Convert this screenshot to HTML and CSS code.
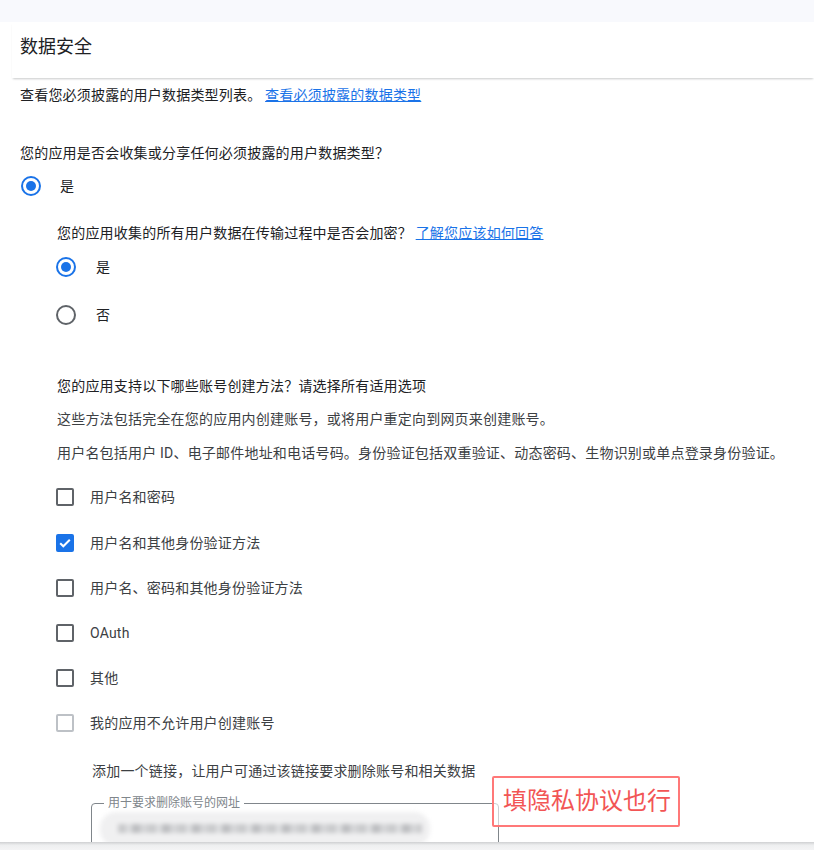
FILE: index.html
```html
<!DOCTYPE html>
<html lang="zh-CN">
<head>
<meta charset="utf-8">
<title>数据安全</title>
<link rel="stylesheet" href="styles.css">
</head>
<body>
<div class="topband"></div>
<header class="header"><h1 class="title">数据安全</h1></header>
<main class="content">
  <p class="desc">查看您必须披露的用户数据类型列表。 <a class="link" href="#">查看必须披露的数据类型</a></p>
  <p class="question">您的应用是否会收集或分享任何必须披露的用户数据类型？</p>
  <div class="radio-row top-radio"><span class="radio checked"></span><span class="label">是</span></div>

  <section class="nested">
    <p class="q2">您的应用收集的所有用户数据在传输过程中是否会加密？ <a class="link" href="#">了解您应该如何回答</a></p>
    <div class="radio-row r-yes"><span class="radio checked"></span><span class="label">是</span></div>
    <div class="radio-row r-no"><span class="radio"></span><span class="label">否</span></div>

    <p class="q3">您的应用支持以下哪些账号创建方法？请选择所有适用选项</p>
    <p class="sub sub1">这些方法包括完全在您的应用内创建账号，或将用户重定向到网页来创建账号。</p>
    <p class="sub sub2">用户名包括用户 ID、电子邮件地址和电话号码。身份验证包括双重验证、动态密码、生物识别或单点登录身份验证。</p>

    <ul class="checks">
      <li class="check-row"><span class="box"></span><span class="label">用户名和密码</span></li>
      <li class="check-row first-gap"><span class="box checked"><svg viewBox="0 0 18 18" width="18" height="18"><path d="M4.2 9.2l3.1 3.1 6.5-6.6" fill="none" stroke="#fff" stroke-width="2"/></svg></span><span class="label">用户名和其他身份验证方法</span></li>
      <li class="check-row"><span class="box"></span><span class="label">用户名、密码和其他身份验证方法</span></li>
      <li class="check-row"><span class="box"></span><span class="label">OAuth</span></li>
      <li class="check-row"><span class="box"></span><span class="label">其他</span></li>
      <li class="check-row"><span class="box disabled"></span><span class="label">我的应用不允许用户创建账号</span></li>
    </ul>

    <div class="delete-block">
      <p class="add-link">添加一个链接，让用户可通过该链接要求删除账号和相关数据</p>
      <fieldset class="url-field">
        <legend class="legend">用于要求删除账号的网址</legend>
        <div class="blurred">
          <span class="blur-bar"></span>
        </div>
      </fieldset>
      <div class="note">填隐私协议也行</div>
    </div>
  </section>
</main>
<div class="bottom-edge"></div>
</body>
</html>
```

FILE: styles.css
```css
* { box-sizing: border-box; }
html, body { margin: 0; padding: 0; }
body {
  width: 814px;
  height: 850px;
  overflow: hidden;
  background: #fff;
  font-family: Roboto, "Noto Sans CJK SC", sans-serif;
  color: #202124;
  font-size: 14px;
  line-height: 20px;
  position: relative;
}
p { margin: 0; }

.topband { height: 22px; background: #f8f9fd; }

.header {
  height: 56px;
  margin-left: 12px;
  padding: 0 0 6px 8px;
  display: flex;
  align-items: center;
  background: #fff;
  box-shadow: 0 2px 2px -1px rgba(60,64,67,.28);
  position: relative;
  z-index: 1;
}
.title {
  margin: 0;
  font-size: 18px;
  font-weight: 400;
  color: #202124;
  line-height: 24px;
}

.content { padding-left: 20px; letter-spacing: 0.2px; }

.link { color: #1a73e8; text-decoration: underline; }

.desc { margin-top: 7px; }
.question { margin-top: 38px; }

.radio-row { display: flex; align-items: center; height: 20px; }
.top-radio { margin-top: 13px; padding-left: 1px; }
.radio {
  width: 20px; height: 20px;
  border-radius: 50%;
  border: 2px solid #5f6368;
  position: relative;
  flex: none;
}
.radio.checked { border-color: #1a73e8; }
.radio.checked::after {
  content: "";
  position: absolute;
  left: 3px; top: 3px;
  width: 10px; height: 10px;
  border-radius: 50%;
  background: #1a73e8;
}
.radio-row .label { margin-left: 19px; }

.nested { padding-left: 37px; }
.q2 { margin-top: 27px; }
.r-yes { margin-top: 14px; padding-left: 0; }
.r-no { margin-top: 28px; }
.nested .radio-row .label { margin-left: 20px; }
.nested .radio-row { margin-left: -1px; }

.q3 { margin-top: 51px; color: #202124; }
.sub { color: #3c4043; }
.sub1 { margin-top: 13px; }
.sub2 { margin-top: 14px; }

.checks { list-style: none; margin: 24px 0 0; padding: 0; }
.check-row { display: flex; align-items: center; height: 20px; margin-top: 25px; margin-left: -1px; }
.check-row:first-child { margin-top: 0; }
.check-row.first-gap { margin-top: 26px; }
.box {
  width: 18px; height: 18px;
  border: 2px solid #5f6368;
  border-radius: 2px;
  flex: none;
  display: flex;
  align-items: center;
  justify-content: center;
}
.box.checked { background: #1a73e8; border-color: #1a73e8; }
.box.checked svg { flex: none; margin: -2px; }
.box.disabled { border-color: #bdc1c6; }
.check-row .label { margin-left: 16px; color: #3c4043; }

.delete-block { padding-left: 35px; position: relative; margin-top: 28px; }
.add-link { color: #3c4043; }
.url-field {
  margin: 15px 0 0 -1px;
  width: 408px;
  height: 60px;
  border: 1px solid #80868b;
  border-radius: 4px;
  padding: 0 8px;
}
.legend {
  font-size: 12px;
  line-height: 14px;
  color: #80868b;
  padding: 0 4px;
  margin-left: 4px;
  letter-spacing: 0;
}
.blurred {
  margin-top: 2px;
  margin-left: 0;
  width: 330px;
  height: 34px;
  border-radius: 16px;
  background: #f0f0f1;
  filter: blur(2px);
  position: relative;
}
.blur-bar {
  position: absolute;
  left: 18px; right: 8px; top: 12px;
  height: 9px;
  background: repeating-linear-gradient(90deg, #c9cacc 0 8px, #dcdddf 8px 14px, #bdbec1 14px 22px, #d4d5d7 22px 30px);
}

.note {
  position: absolute;
  left: 435px;
  top: 15px;
  width: 188px;
  height: 51px;
  border: 2px solid #ff7878;
  border-radius: 2px;
  color: #f25555;
  font-size: 24px;
  line-height: 47px;
  padding-left: 9px;
  letter-spacing: 0;
  background: rgba(255,255,255,0.6);
}

.bottom-edge {
  position: absolute;
  left: 0; right: 0; bottom: 0;
  height: 8px;
  background: linear-gradient(#cfd0d2, #eeeff0 40%, #f4f4f5);
  z-index: 2;
}
```
